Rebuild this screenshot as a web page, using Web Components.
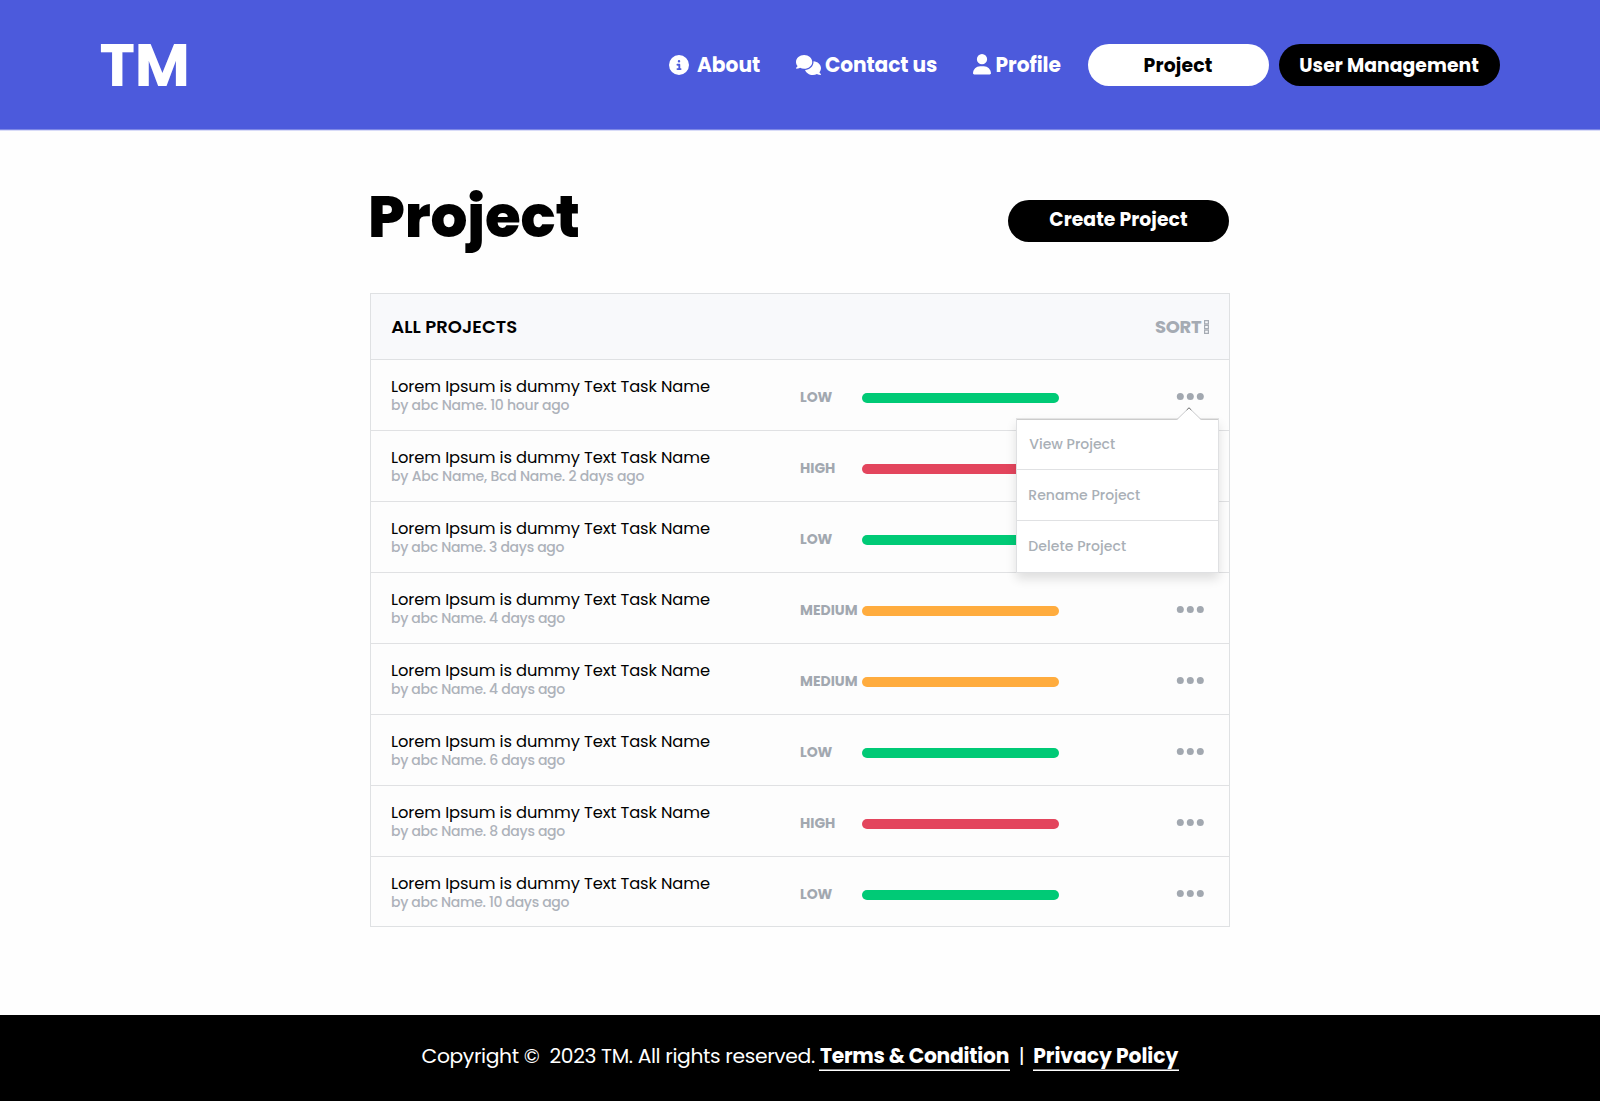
<!DOCTYPE html>
<html lang="en">
<head>
<meta charset="utf-8">
<title>TM - Project</title>
<style>
  html, body { margin: 0; }
  body { background: #fefefe; font-family: Poppins, Inter, "Open Sans", sans-serif; color: #000; }
</style>
</head>
<body>
<tm-page></tm-page>
<script>
const define = (name, html, setup) => {
  const tpl = document.createElement('template');
  tpl.innerHTML = html;
  customElements.define(name, class extends HTMLElement {
    constructor() {
      super();
      this.attachShadow({ mode: 'open' }).appendChild(tpl.content.cloneNode(true));
    }
    connectedCallback() { if (setup) setup(this, this.shadowRoot); }
  });
};

/* Label whose glyphs are tracked to fill the width given in "w". */
const ctx = document.createElement('canvas').getContext('2d');
define('fit-text', `<style>
    :host { display: block; white-space: nowrap; flex: none; }
    span { display: block; white-space: pre; }
  </style><span><slot></slot></span>`, (el, root) => {
  const text = el.textContent, w = +el.getAttribute('w');
  const cs = getComputedStyle(el);
  ctx.font = `${cs.fontWeight} ${cs.fontSize} ${cs.fontFamily}`;
  const m = ctx.measureText(text);
  const ink = m.actualBoundingBoxRight + m.actualBoundingBoxLeft;
  const span = root.querySelector('span');
  if (text.length > 1) span.style.letterSpacing = (w - ink) / (text.length - 1) + 'px';
  span.style.marginLeft = m.actualBoundingBoxLeft + 'px';
  el.style.width = w + 'px';
});

define('tm-icon', `<style>:host { display: block; flex: none; } svg { display: block; fill: currentColor; }</style>`, (el, root) => {
  const icons = {
    info: [20, 20, '0 0 512 512', '<path d="M256 512A256 256 0 1 0 256 0a256 256 0 1 0 0 512zM216 336h24V272H216c-13.300 0-24-10.700-24-24s10.700-24 24-24h48c13.300 0 24 10.700 24 24v88h8c13.300 0 24 10.700 24 24s-10.700 24-24 24H216c-13.300 0-24-10.700-24-24s10.700-24 24-24zm40-208a32 32 0 1 1 0 64 32 32 0 1 1 0-64z"/>'],
    comments: [25, 20, '0 0 640 512', '<path d="M208 352c114.900 0 208-78.800 208-176S322.900 0 208 0S0 78.800 0 176c0 38.600 14.700 74.300 39.600 103.400c-3.500 9.400-8.700 17.700-14.200 24.700c-4.800 6.200-9.700 11-13.300 14.300c-1.800 1.600-3.300 2.900-4.300 3.700c-.5 .4-.9 .7-1.100 .8l-.2 .2C1 327.200-1.400 334.400 .8 340.900S9.100 352 16 352c21.800 0 43.800-5.600 62.100-12.500c9.200-3.500 17.800-7.400 25.300-11.400C134.100 343.300 169.800 352 208 352zM448 176c0 112.300-99.100 196.900-216.500 207C255.800 457.400 336.400 512 432 512c38.200 0 73.900-8.700 104.700-23.900c7.500 4 16 7.900 25.200 11.400c18.300 6.900 40.300 12.500 62.100 12.500c6.900 0 13.100-4.500 15.200-11.100c2.100-6.600-.2-13.800-5.800-17.900l-.2-.2c-.2-.2-.6-.4-1.100-.8c-1-.8-2.500-2-4.300-3.700c-3.600-3.300-8.500-8.100-13.300-14.300c-5.500-7-10.700-15.400-14.200-24.700c24.900-29 39.600-64.700 39.600-103.400c0-92.800-84.900-168.900-192.600-175.500c.4 5.100 .6 10.300 .6 15.500z"/>'],
    user: [18, 20.5, '0 0 448 512', '<path d="M224 256A128 128 0 1 0 224 0a128 128 0 1 0 0 256zm-45.700 48C79.800 304 0 383.800 0 482.300C0 498.700 13.300 512 29.700 512H418.300c16.400 0 29.700-13.300 29.700-29.700C448 383.800 368.200 304 269.700 304H178.300z"/>'],
    dots: [29, 7, '0 0 29 7', '<circle cx="4.300" cy="3.500" r="3.500"/><circle cx="14.300" cy="3.500" r="3.500"/><circle cx="24.300" cy="3.500" r="3.500"/>'],
    boxes: [5, 14, '0 0 5 14', '<path fill="none" stroke="currentColor" stroke-width="1.200" d="M.6.6h3.800v3.200h-3.800zM.6 5.400h3.800v3.200h-3.800zM.6 10.200h3.800v3.200h-3.800z"/>'],
  };
  const [w, h, box, body] = icons[el.getAttribute('name')];
  root.innerHTML += `<svg width="${w}" height="${h}" viewBox="${box}">${body}</svg>`;
});

define('tm-pill', `
  <style>
    :host { display: flex; box-sizing: border-box; height: 42px; width: 221px; border-radius: 21px; background: #000; color: #fff;
      align-items: center; font-size: 18.800px; line-height: 24px; font-weight: 700; flex: none; }
    :host([light]) { background: #fff; color: #000; width: 181px; }
  </style><slot></slot>`);

define('tm-header', `
  <style>
    :host { display: block; background: #4c5adc; border-bottom: 1px solid #7d87e5; box-shadow: 0 1px #d8dbf8; color: #fff; }
    header { display: flex; align-items: center; height: 129px; padding: 0 100px 0 100.400px; }
    .logo { font-size: 60px; font-weight: 700; line-height: 70px; padding-top: 1px; margin-right: auto; }
    nav { display: flex; align-items: center; font-size: 20.200px; font-weight: 700; }
    nav fit-text { padding-top: 1px; line-height: 24px; }
    tm-pill { margin-top: 1px; }
  </style>
  <header>
    <fit-text class="logo" w="86.300">TM</fit-text>
    <nav>
      <tm-icon name="info"></tm-icon>
      <fit-text w="63" style="margin:0 36px 0 7.700px">About</fit-text>
      <tm-icon name="comments"></tm-icon>
      <fit-text w="112" style="margin:0 36px 0 4px">Contact us</fit-text>
      <tm-icon name="user"></tm-icon>
      <fit-text w="64" style="margin:0 27.500px 0 5.500px">Profile</fit-text>
      <tm-pill light style="padding-left:56.500px"><fit-text w="67.300">Project</fit-text></tm-pill>
      <tm-pill style="margin-left:10px;padding-left:21.300px"><fit-text w="178">User Management</fit-text></tm-pill>
    </nav>
  </header>`);

define('tm-row', `
  <style>
    :host { display: grid; grid-template-columns: 408.100px 62px 197px 1fr; padding-left: 21px; height: 70px;
      border-bottom: 1px solid #e0e1e3; position: relative; color: #a2a8b0; }
    .name { padding-top: 17px; line-height: 19px; font-size: 14px; }
    .title { font-size: 16.300px; color: #000; }
    .name .by { color: #adb2ba; font-weight: 500; }
    .prio { font-size: 14px; font-weight: 700; line-height: 20px; padding-top: 27px; }
    .bar { height: 10px; border-radius: 5px; margin-top: 33px; background: var(--bar); }
    tm-icon { margin: 33px 0 0 117px; }
  </style>
  <div class="name"></div><div class="prio"></div><div class="bar"></div><tm-icon name="dots"></tm-icon><slot></slot>`,
  (el, root) => {
    const level = el.getAttribute('level');
    const [color, w] = { LOW: ['#00ca76', 32.5], HIGH: ['#e3455d', 35], MEDIUM: ['#ffac3e', 56.6] }[level];
    el.style.setProperty('--bar', color);
    root.querySelector('.name').innerHTML =
      `<fit-text class="title" w="317.900">Lorem Ipsum is dummy Text Task Name</fit-text><fit-text class="by" w="${el.getAttribute('w')}">${el.getAttribute('by')}</fit-text>`;
    root.querySelector('.prio').innerHTML = `<fit-text w="${w}">${level}</fit-text>`;
  });

define('tm-menu', `
  <style>
    :host { display: block; position: absolute; z-index: 2; left: 645px; top: 58px; width: 201px; background: #fff;
      border: 1px solid #dfe0e2; border-top-color: #e4e4e4; box-shadow: 0 6px 10px rgba(0,0,0,.12); color: #a9afb6; font-size: 14px; line-height: 20px; font-weight: 500; }
    div { display: flex; box-sizing: border-box; align-items: center; height: 51px; padding-left: 12.300px; border-bottom: 1px solid #e0e1e3; }
    div:first-of-type { border-top: 1px solid #ccc; padding-bottom: 1px; }
    div:last-of-type { border-bottom: 0; padding-bottom: 1px; }
    svg { position: absolute; left: 159px; top: -12px; display: block; }
  </style>
  <div><fit-text w="85.700">View Project</fit-text></div>
  <div><fit-text w="110.700">Rename Project</fit-text></div>
  <div><fit-text w="96.700">Delete Project</fit-text></div>
  <svg width="26" height="14" viewBox="0 0 26 14"><path d="M.8 14V12.700L13 .8 25.200 12.700V14z" fill="#fff"/><path d="M1 12.500 13 .8 25 12.500" fill="none" stroke="#c9cacc"/><path d="M10.700 3 13 .8 15.300 3" fill="none" stroke="#777"/></svg>`);

define('tm-projects', `
  <style>
    :host { display: block; box-sizing: border-box; width: 860px; border: 1px solid #dfe1e3; background: #fdfdfd; }
    .head { display: flex; align-items: center; height: 65px; padding: 0 20px 0 20.300px; border-bottom: 1px solid #dfe1e3;
      background: #f8f9fb; font-size: 18px; line-height: 24px; font-weight: 600; }
    .sort { display: flex; align-items: center; margin-left: auto; gap: 2px; color: #a5abb3; font-weight: 700; }
    tm-row:last-child { height: 69px; border-bottom: 0; }
  </style>
  <div class="head"><fit-text w="126">ALL PROJECTS</fit-text>
    <div class="sort"><fit-text w="47">SORT</fit-text><tm-icon name="boxes"></tm-icon></div></div>
  <tm-row level="LOW" by="by abc Name. 10 hour ago" w="177.500"><tm-menu></tm-menu></tm-row>
  <tm-row level="HIGH" by="by Abc Name, Bcd Name. 2 days ago" w="252.500"></tm-row>
  <tm-row level="LOW" by="by abc Name. 3 days ago" w="172.500"></tm-row>
  <tm-row level="MEDIUM" by="by abc Name. 4 days ago" w="173.300"></tm-row>
  <tm-row level="MEDIUM" by="by abc Name. 4 days ago" w="173.300"></tm-row>
  <tm-row level="LOW" by="by abc Name. 6 days ago" w="173.300"></tm-row>
  <tm-row level="HIGH" by="by abc Name. 8 days ago" w="173.300"></tm-row>
  <tm-row level="LOW" by="by abc Name. 10 days ago" w="177.500"></tm-row>`);

define('tm-footer', `
  <style>
    :host { display: flex; height: 86px; background: #000; color: #fff; font-size: 20.300px; line-height: 24px;
      padding: 29px 0 0 421.600px; box-sizing: border-box; align-items: flex-start; }
    .link { font-weight: 700; padding: 0 1px 1px; border-bottom: 1px solid #fff; box-shadow: inset 0 -1px #888; height: 25px; }
    .sep { margin: 0 10.500px 0 11px; }
  </style>
  <fit-text w="393.300">Copyright ©  2023 TM. All rights reserved.</fit-text>
  <div class="link" style="margin-left:4px"><fit-text w="188.800">Terms &amp; Condition</fit-text></div>
  <fit-text class="sep" w="2">|</fit-text>
  <div class="link"><fit-text w="144.300">Privacy Policy</fit-text></div>`);

define('tm-page', `
  <style>
    :host { display: flex; flex-direction: column; height: 1101px; }
    main { flex: 1; width: 860px; margin: 0 auto; }
    .top { display: flex; height: 163px; align-items: flex-start; justify-content: space-between; }
    h1 { margin: 52px 0 0 1px; font-size: 58px; font-weight: 800; line-height: 70px; }
    tm-pill { margin-top: 70px; margin-right: 1px; padding: 0 0 3px 41.300px; }
  </style>
  <tm-header></tm-header>
  <main>
    <div class="top"><h1><fit-text w="207.500">Project</fit-text></h1>
      <tm-pill><fit-text w="137.600">Create Project</fit-text></tm-pill></div>
    <tm-projects></tm-projects>
  </main>
  <tm-footer></tm-footer>`);
</script>
</body>
</html>
